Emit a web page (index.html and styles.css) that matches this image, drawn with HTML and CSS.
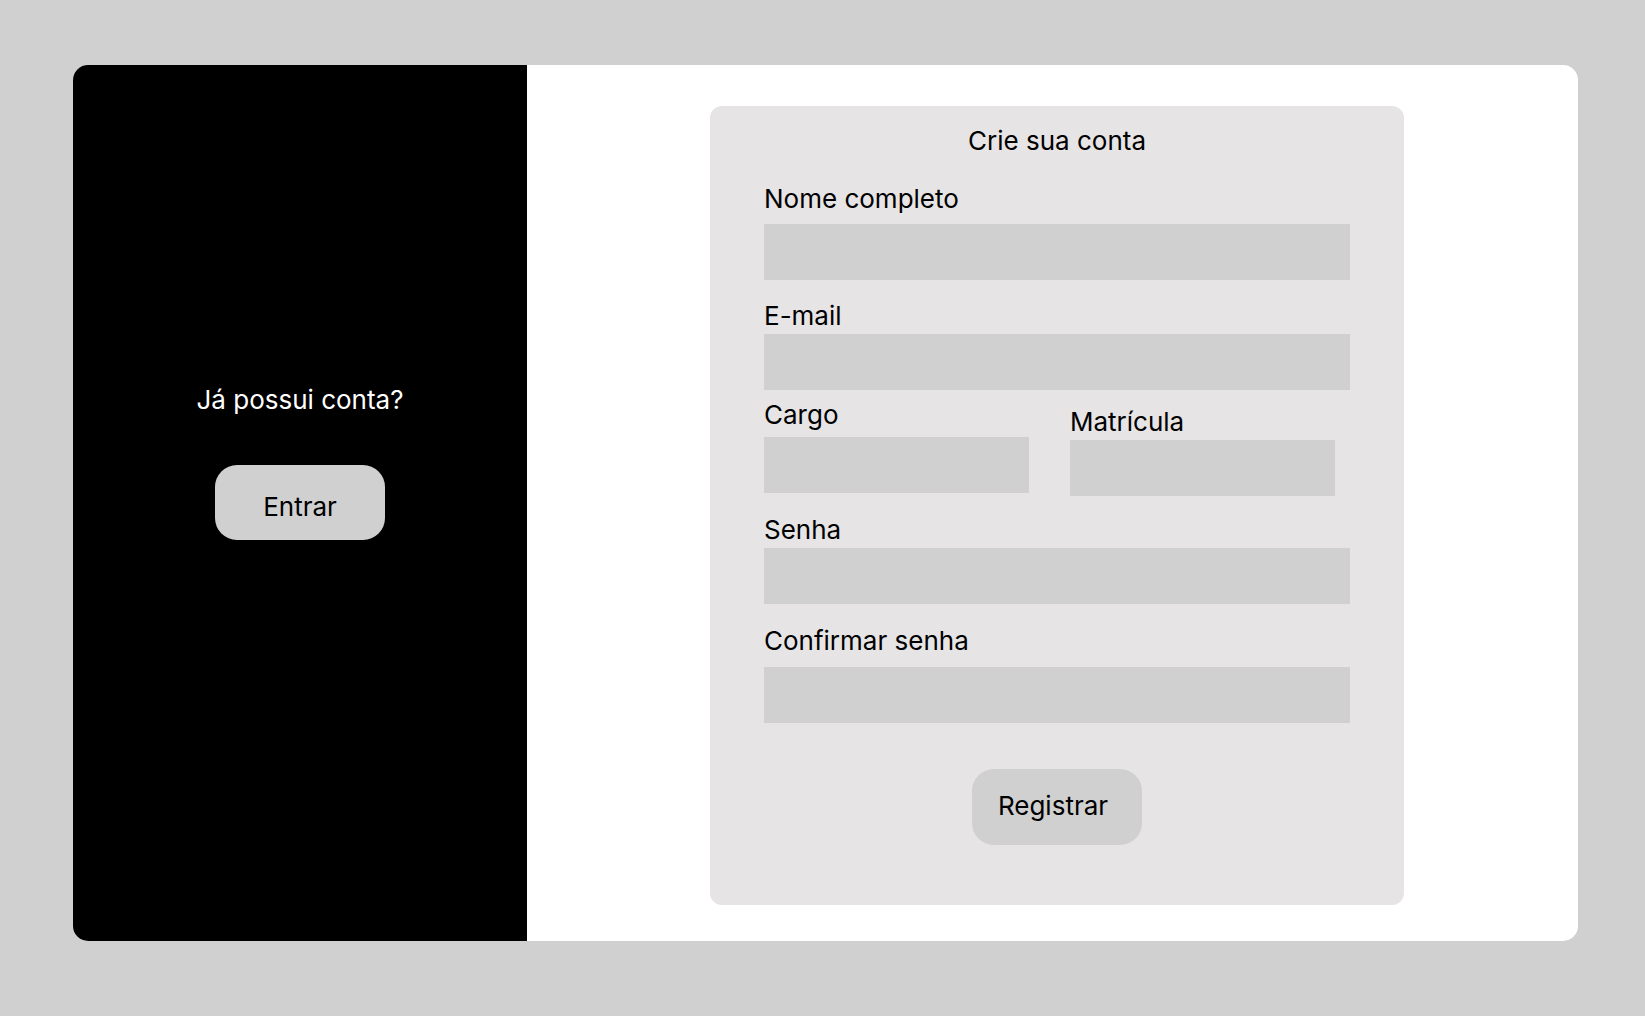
FILE: index.html
```html
<!DOCTYPE html>
<html lang="pt-BR">
<head>
<meta charset="utf-8">
<title>Crie sua conta</title>
<link rel="stylesheet" href="styles.css">
</head>
<body>
<div class="card">
  <aside class="side">
    <p class="side-text">Já possui conta?</p>
    <button class="btn btn-enter">Entrar</button>
  </aside>
  <main class="main">
    <form class="form">
      <h1 class="title">Crie sua conta</h1>
      <label class="label label-nome">Nome completo</label>
      <div class="input"></div>
      <label class="label label-email">E-mail</label>
      <div class="input input-email"></div>
      <div class="row">
        <div class="col col-cargo">
          <label class="label">Cargo</label>
          <div class="input input-half"></div>
        </div>
        <div class="col col-mat">
          <label class="label">Matrícula</label>
          <div class="input input-half"></div>
        </div>
      </div>
      <label class="label label-senha">Senha</label>
      <div class="input input-senha"></div>
      <label class="label label-conf">Confirmar senha</label>
      <div class="input input-conf"></div>
      <button class="btn btn-reg" type="button">Registrar</button>
    </form>
  </main>
</div>
</body>
</html>
```

FILE: styles.css
```css
* { box-sizing: border-box; }
html, body {
  margin: 0;
  padding: 0;
  background: #d0d0d0;
  font-family: Inter, "Noto Sans", sans-serif;
  color: #000;
}
body {
  padding: 65px 0 0 73px;
  height: 1016px;
}
.card {
  width: 1505px;
  height: 876px;
  background: #fff;
  border-radius: 15px;
  overflow: hidden;
  display: flex;
}
.side {
  width: 454px;
  background: #000;
  display: flex;
  flex-direction: column;
  align-items: center;
  justify-content: center;
  padding-bottom: 82px;
}
.side-text {
  margin: 0;
  color: #fff;
  font-size: 26px;
  line-height: 30px;
}
.btn {
  font-family: inherit;
  border: none;
  background: #d0d0d0;
  color: #000;
  font-size: 26px;
  width: 170px;
  height: 75px;
  border-radius: 22px;
  padding: 0;
}
.btn-enter {
  margin-top: 50px;
  padding-top: 8px;
}
.main {
  flex: 1;
  padding: 41px 0 0 183px;
}
.form {
  width: 694px;
  height: 799px;
  background: #e6e4e5;
  border-radius: 12px;
  padding: 20px 54px 0 54px;
  display: flex;
  flex-direction: column;
}
.title {
  margin: 0;
  font-weight: 400;
  font-size: 26px;
  line-height: 30px;
  text-align: center;
}
.label {
  display: block;
  font-size: 26px;
  line-height: 30px;
}
.label-nome { margin-top: 28px; }
.input {
  width: 586px;
  height: 56px;
  background: #d0d0d0;
  margin-top: 10px;
}
.label-email { margin-top: 21px; }
.input-email { margin-top: 3px; }
.row {
  display: flex;
  gap: 41px;
  margin-top: 10px;
}
.col { display: flex; flex-direction: column; }
.col-mat { padding-top: 7px; }
.input-half {
  width: 265px;
  margin-top: 7px;
}
.col-mat .input-half { margin-top: 3px; }
.label-senha { margin-top: 19px; }
.input-senha { margin-top: 3px; }
.label-conf { margin-top: 22px; }
.input-conf { margin-top: 11px; }
.btn-reg {
  align-self: center;
  margin-top: 46px;
  height: 76px;
  padding: 0 8px 3px 0;
}
```
